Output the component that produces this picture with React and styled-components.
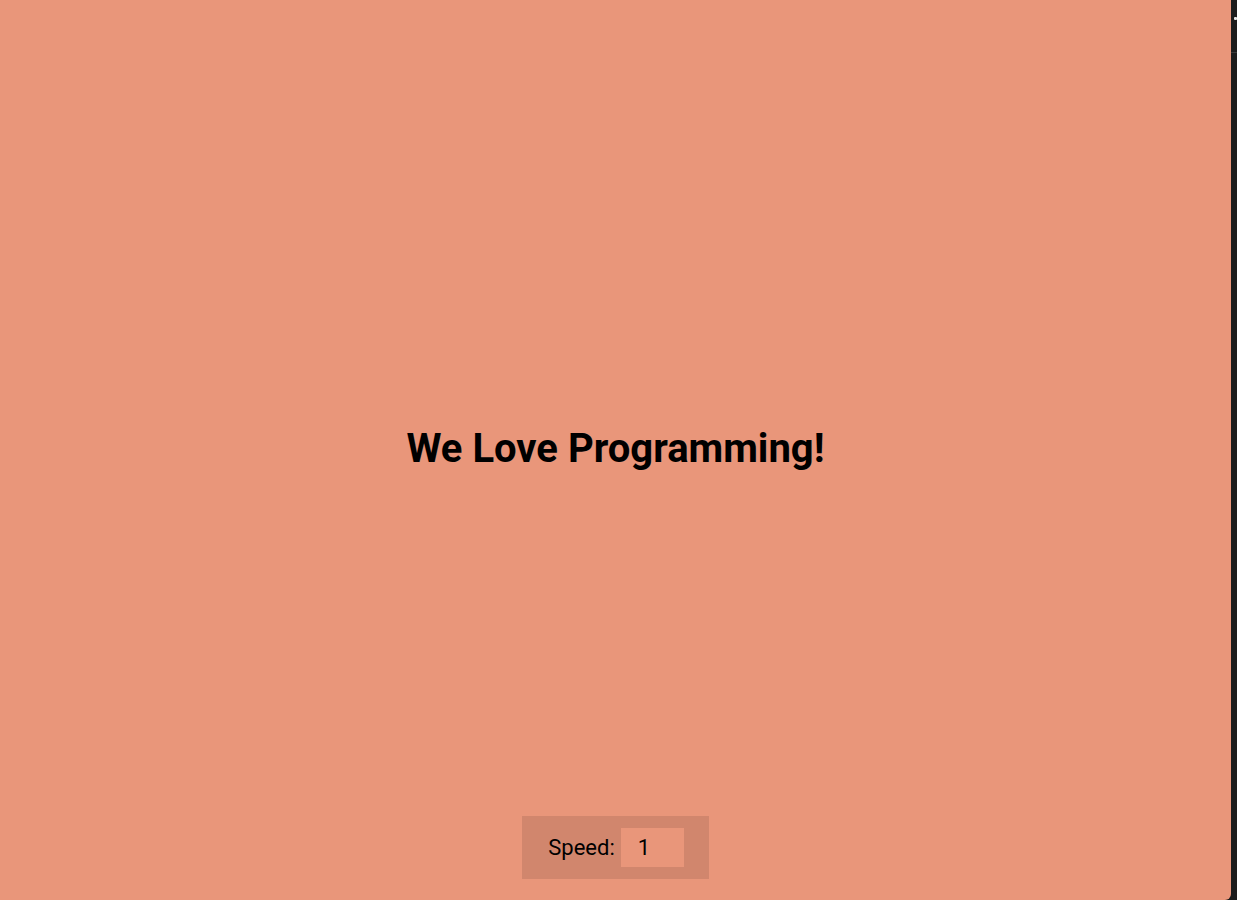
import React from "react";
import styled, { createGlobalStyle } from "styled-components";

const GlobalStyle = createGlobalStyle`
  html, body {
    margin: 0;
    padding: 0;
    background: #1c1c1c;
    font-family: Roboto, "Liberation Sans", sans-serif;
    overflow: hidden;
  }
`;

function App() {
  return (
    <>
      <GlobalStyle />
      <Page>
        <Stage>
          <Center>
            <Title>We Love Programming!</Title>
          </Center>
          <Controls>
            <Label htmlFor="speed">Speed:</Label>
            <SpeedInput id="speed" type="number" defaultValue="1" />
          </Controls>
        </Stage>
        <Edge>
          <EdgeMark />
          <EdgeLine />
        </Edge>
      </Page>
    </>
  );
}

export default App;

const Page = styled.div`
  display: flex;
  width: 100vw;
  height: 100vh;
`;

const Stage = styled.div`
  flex: 1;
  display: flex;
  flex-direction: column;
  align-items: center;
  background-color: #e9967a;
  border-bottom-right-radius: 6px;
  padding-bottom: 21px;
`;

const Center = styled.div`
  flex: 1;
  display: flex;
  align-items: center;
  justify-content: center;
  padding-top: 80px;
`;

const Title = styled.h1`
  margin: 0;
  font-size: 40px;
  font-weight: 700;
  color: #000;
`;

const Controls = styled.div`
  display: flex;
  align-items: center;
  gap: 6px;
  padding: 12px 25px 12px 26px;
  background-color: rgba(0, 0, 0, 0.1);
`;

const Label = styled.label`
  font-size: 22px;
  color: #000;
`;

const SpeedInput = styled.input`
  width: 63px;
  height: 39px;
  box-sizing: border-box;
  border: none;
  outline: none;
  padding: 0 0 0 17px;
  background-color: #e9967a;
  font-family: Roboto, "Liberation Sans", sans-serif;
  font-size: 22px;
  color: #000;
  -moz-appearance: textfield;
  &::-webkit-outer-spin-button,
  &::-webkit-inner-spin-button {
    -webkit-appearance: none;
    margin: 0;
  }
`;

const Edge = styled.div`
  width: 6px;
  display: flex;
  flex-direction: column;
  align-items: flex-end;
`;

const EdgeMark = styled.div`
  width: 3px;
  height: 3px;
  margin-top: 17px;
  background: #e8e8e8;
  border-radius: 1px;
`;

const EdgeLine = styled.div`
  width: 100%;
  height: 1px;
  margin-top: 32px;
  background: #3a3a3a;
`;
